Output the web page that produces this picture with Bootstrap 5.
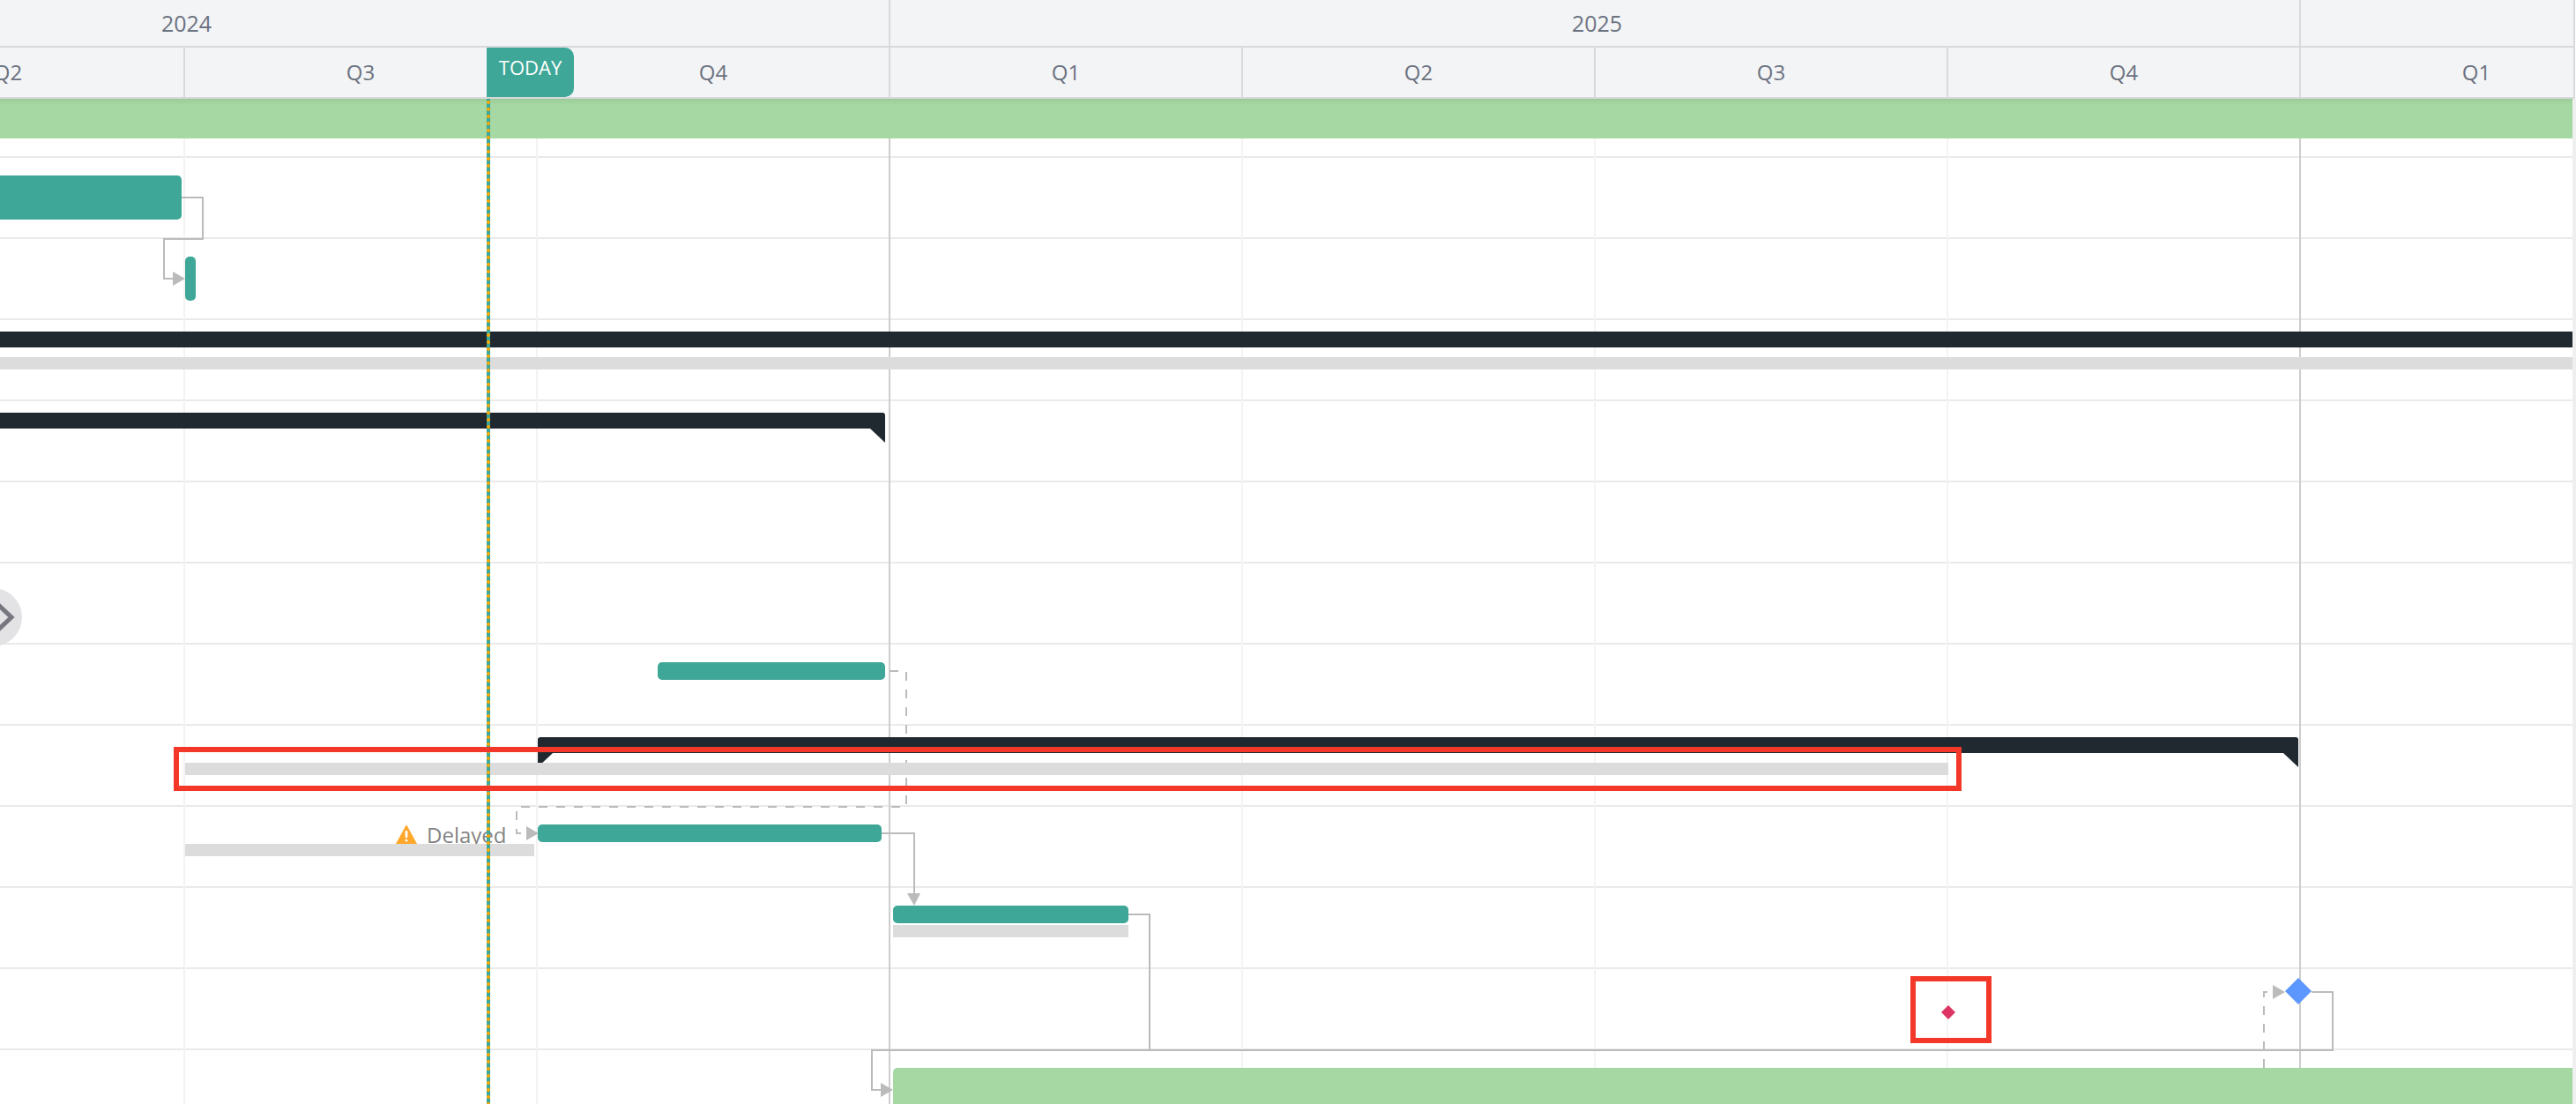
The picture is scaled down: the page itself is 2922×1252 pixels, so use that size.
<!DOCTYPE html>
<html lang="en">
<head>
<meta charset="utf-8">
<title>Gantt</title>
<link href="https://cdn.jsdelivr.net/npm/bootstrap@5.3.0/dist/css/bootstrap.min.css" rel="stylesheet">
<style>
html,body{margin:0;height:1252px;overflow:hidden;background:#fff}
body{font-family:"Open Sans","Liberation Sans",sans-serif;font-size:24px}
.g-head{width:2921px;height:112px;background:#f3f4f6;color:#6b7280;border-right:2px solid #d9d9dc}
.g-years{height:54px;margin-left:-590px;border-bottom:2px solid #d9d9dc}
.g-quarters{height:58px;margin-left:-590px;border-bottom:2px solid #d9d9dc}
.g-year{flex:0 0 1600px;padding-left:5px;font-size:25px;line-height:52px;border-right:2px solid #d9d9dc}
.g-q{flex:0 0 400px;line-height:56px;border-right:2px solid #d9d9dc}
.g-today{left:552px;top:54px;width:99px;height:56px;background:#3ea798;color:#fff;font-size:22px;line-height:30px;padding-top:7px;border-radius:0 10px 10px 0}
.g-body{width:2922px;height:1140px;border-right:4px solid #efefef}
.g-canvas{width:2918px;height:1140px}
.g-row{height:92px;border-bottom:2px solid #eaeaea}
.g-row-first{height:67px}
.g-grid{left:-590px;top:0;bottom:0}
.g-cell{flex:0 0 400px;border-right:2px solid #f3f3f3}
.g-cell-year{border-right-color:#cdcdcd}
.g-lines{left:0;top:0}
.g-bar{position:absolute}
.g-teal{background:#3ea798;border-radius:5px}
.g-dark{background:#212930;border-radius:3px 3px 0 0}
.g-dark::before,.g-dark::after{content:"";position:absolute;top:100%;width:17px;height:16px;background:#212930}
.g-dark::before{left:0;clip-path:polygon(0 0,100% 0,0 100%)}
.g-dark::after{right:0;clip-path:polygon(0 0,100% 0,100% 100%)}
.g-flat{background:#212930}
.g-base{background:#dcdcdc}
.g-green{background:#a5d8a3}
.g-green-top{background:linear-gradient(#9ccb9a,#a5d8a3 7px)}
.g-green-bottom{border-radius:5px 0 0 0}
.g-delayed{left:449px;top:818px;color:#848484;line-height:33px;gap:11px}
.g-warn{margin-top:5px}
.g-now{left:552px;top:0;bottom:0;width:4px;background:radial-gradient(circle 2px at center,#ffa800 95%,transparent) 0 0/4px 8px,#3ea798}
.g-mark{border:6px solid #f33829}
.g-toggle{left:-41px;top:555px;width:66px;height:66px;background:#e3e3e6}
</style>
</head>
<body>
<header class="g-head position-relative overflow-hidden text-center">
  <div class="g-years d-flex">
    <div class="g-year">2024</div>
    <div class="g-year">2025</div>
    <div class="g-year"></div>
  </div>
  <div class="g-quarters d-flex">
    <div class="g-q"></div><div class="g-q">Q2</div><div class="g-q">Q3</div><div class="g-q">Q4</div>
    <div class="g-q">Q1</div><div class="g-q">Q2</div><div class="g-q">Q3</div><div class="g-q">Q4</div>
    <div class="g-q">Q1</div>
  </div>
  <div class="g-today position-absolute">TODAY</div>
</header>

<main class="g-body">
  <div class="g-canvas position-relative overflow-hidden">
    <div class="g-row g-row-first"></div>
    <div class="g-row"></div><div class="g-row"></div><div class="g-row"></div>
    <div class="g-row"></div><div class="g-row"></div><div class="g-row"></div>
    <div class="g-row"></div><div class="g-row"></div><div class="g-row"></div>
    <div class="g-row"></div><div class="g-row"></div><div class="g-row"></div>

    <div class="g-grid position-absolute d-flex">
      <div class="g-cell"></div><div class="g-cell"></div><div class="g-cell"></div><div class="g-cell g-cell-year"></div>
      <div class="g-cell"></div><div class="g-cell"></div><div class="g-cell"></div><div class="g-cell g-cell-year"></div>
    </div>

    <svg class="g-lines position-absolute" width="2918" height="1140" viewBox="0 112 2918 1140" fill="none" stroke="#bbb" stroke-width="2">
      <path d="M206 224H230V271H186V316H197"/>
      <path d="M1009 761H1028V915H586V945H597" stroke-dasharray="10 10"/>
      <path d="M1000 945H1037V1014"/>
      <path d="M1280 1037H1304V1191"/>
      <path d="M2622 1125H2646V1191H989V1236H1000"/>
      <path d="M2568 1211V1125H2578" stroke-dasharray="10 10"/>
      <g fill="#bbb" stroke="none">
        <polygon points="196,308 210,316 196,324"/>
        <polygon points="597,937 611,945 597,953"/>
        <polygon points="1029,1013 1044,1013 1037,1027"/>
        <polygon points="999,1228 1013,1236 999,1244"/>
        <polygon points="2578,1117 2592,1125 2578,1133"/>
      </g>
    </svg>

    <div class="g-delayed position-absolute d-flex align-items-start">
      <svg class="g-warn" width="24" height="24" viewBox="0 0 24 24"><path d="M12 1 L23.5 22 H.5Z" fill="#ffa72b" stroke="#ffa72b" stroke-width="1" stroke-linejoin="round"/><rect x="10.6" y="7" width="2.8" height="8" rx="1.2" fill="#fff"/><circle cx="12" cy="18" r="1.5" fill="#fff"/></svg>
      <span>Delayed</span>
    </div>

    <div class="g-bar g-green g-green-top" style="left:0;top:0;width:2918px;height:45px"></div>
    <div class="g-bar g-teal" style="left:-100px;top:87px;width:306px;height:50px"></div>
    <div class="g-bar g-teal" style="left:210px;top:179px;width:12px;height:50px"></div>
    <div class="g-bar g-flat" style="left:0;top:264px;width:2918px;height:18px"></div>
    <div class="g-bar g-base" style="left:0;top:293px;width:2918px;height:14px"></div>
    <div class="g-bar g-dark" style="left:-100px;top:356px;width:1104px;height:18px"></div>
    <div class="g-bar g-teal" style="left:746px;top:639px;width:258px;height:20px"></div>
    <div class="g-bar g-dark" style="left:610px;top:724px;width:1997px;height:18px"></div>
    <div class="g-bar g-base" style="left:210px;top:753px;width:2000px;height:14px"></div>
    <div class="g-bar g-base" style="left:210px;top:845px;width:396px;height:14px"></div>
    <div class="g-bar g-teal" style="left:610px;top:823px;width:390px;height:20px"></div>
    <div class="g-bar g-teal" style="left:1013px;top:915px;width:267px;height:20px"></div>
    <div class="g-bar g-base" style="left:1013px;top:937px;width:267px;height:14px"></div>
    <div class="g-bar g-green g-green-bottom" style="left:1013px;top:1099px;width:1905px;height:60px"></div>

    <svg class="g-lines position-absolute" width="2918" height="1140" viewBox="0 112 2918 1140">
      <polygon points="2592,1124 2607,1109 2622,1124 2607,1139" fill="#5c96ff"/>
      <polygon points="2202,1148 2210,1140 2218,1148 2210,1156" fill="#dc3564"/>
    </svg>

    <div class="g-now position-absolute"></div>

    <div class="g-mark g-bar" style="left:197px;top:735px;width:2028px;height:50px"></div>
    <div class="g-mark g-bar" style="left:2167px;top:995px;width:92px;height:76px"></div>

    <div class="g-toggle position-absolute rounded-circle">
      <svg class="d-block" width="66" height="66" viewBox="0 0 66 66" fill="none"><path d="M36 16L54 33L36 50" stroke="#77777f" stroke-width="5"/></svg>
    </div>
  </div>
</main>
<script src="https://cdn.jsdelivr.net/npm/bootstrap@5.3.0/dist/js/bootstrap.bundle.min.js"></script>
</body>
</html>
